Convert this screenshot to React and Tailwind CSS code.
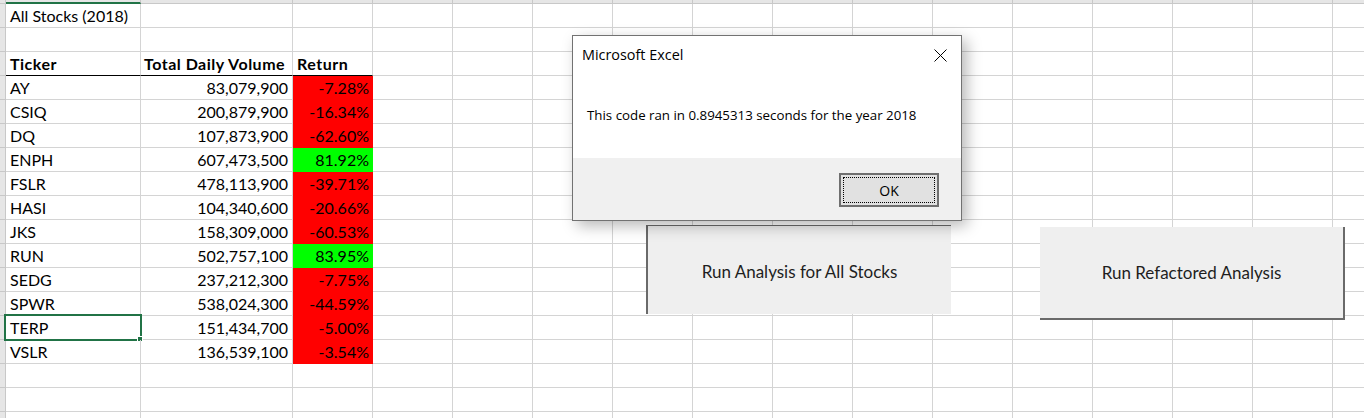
import React from 'react';

const stocks = [
  ['AY', '83,079,900', '-7.28%', false],
  ['CSIQ', '200,879,900', '-16.34%', false],
  ['DQ', '107,873,900', '-62.60%', false],
  ['ENPH', '607,473,500', '81.92%', true],
  ['FSLR', '478,113,900', '-39.71%', false],
  ['HASI', '104,340,600', '-20.66%', false],
  ['JKS', '158,309,000', '-60.53%', false],
  ['RUN', '502,757,100', '83.95%', true],
  ['SEDG', '237,212,300', '-7.75%', false],
  ['SPWR', '538,024,300', '-44.59%', false],
  ['TERP', '151,434,700', '-5.00%', false],
  ['VSLR', '136,539,100', '-3.54%', false],
];

const extraCols = Array.from({ length: 13 }, (_, i) => i);

// 18 visible rows: title, blank, header, 12 stocks, 3 blank
const rows = [
  { a: 'All Stocks (2018)' },
  {},
  { a: 'Ticker', b: 'Total Daily Volume', c: 'Return', header: true },
  ...stocks.map(([a, b, c, up]) => ({ a, b, c, fill: up ? 'green' : 'red', selected: a === 'TERP' })),
  {},
  {},
  {},
];

function Row({ row }) {
  const base = 'h-[24px] shrink-0 border-r border-b border-[#d4d4d4] flex items-end pb-[1px] leading-[20px] whitespace-nowrap';
  const dark = row.header ? 'border-b-black font-bold tracking-[0.5px]' : '';
  return (
    <div className="flex h-[24px]">
      <div className="w-[6px] h-[24px] shrink-0 bg-[#e6e6e6] border-r border-b border-[#c8c8c8]" />
      <div className={`${base} ${dark} w-[135px] pl-[4px] relative`}>
        {row.a}
        {row.selected && (
          <>
            <div className="absolute -left-[2px] -top-[2px] w-[138px] h-[27px] border-2 border-[#217346]" />
            <div className="absolute -right-[3px] -bottom-[3px] w-[6px] h-[6px] bg-[#217346] border border-white" />
          </>
        )}
      </div>
      <div className={`${base} ${dark} w-[152px] pr-[4px] ${row.header ? 'pl-[3px] justify-start' : 'justify-end'}`}>
        {row.b}
      </div>
      <div
        className={`${base} ${dark} w-[80px] pr-[3px] ${row.header ? 'pl-[4px] justify-start' : 'justify-end'} ${
          row.fill === 'red' ? 'bg-[#ff0000] border-r-[#ff0000] border-b-[#ff0000]' : ''
        } ${row.fill === 'green' ? 'bg-[#00ff00] border-r-[#00ff00] border-b-[#00ff00]' : ''}`}
      >
        {row.c}
      </div>
      {extraCols.map((i) => (
        <div key={i} className="w-[80px] h-[24px] shrink-0 border-r border-b border-[#d4d4d4]" />
      ))}
    </div>
  );
}

function Sheet() {
  return (
    <div className="flex flex-col font-[family-name:Lato,sans-serif] text-[16px] text-black">
      <div className="flex h-[4px]">
        <div className="w-[6px] h-[4px] shrink-0 bg-[#e6e6e6] border-r border-b border-[#c8c8c8]" />
        <div className="w-[135px] h-[4px] shrink-0 bg-[#e6e6e6] border-r border-[#c8c8c8] border-b-2 border-b-[#217346]" />
        <div className="w-[152px] h-[4px] shrink-0 bg-[#e6e6e6] border-r border-b border-[#c8c8c8]" />
        <div className="w-[80px] h-[4px] shrink-0 bg-[#e6e6e6] border-r border-b border-[#c8c8c8]" />
        {extraCols.map((i) => (
          <div key={i} className="w-[80px] h-[4px] shrink-0 bg-[#e6e6e6] border-r border-b border-[#c8c8c8]" />
        ))}
      </div>
      {rows.map((row, i) => (
        <Row key={i} row={row} />
      ))}
    </div>
  );
}

function MessageBox() {
  return (
    <div className="absolute left-[572px] top-[35px] w-[390px] h-[186px] border border-[#727272] bg-white flex flex-col shadow-[5px_5px_14px_rgba(0,0,0,0.28)] font-[family-name:'Open_Sans',sans-serif] text-black">
      <div className="h-[38px] flex items-center justify-between pl-[9px] pr-[14px] text-[14.4px]">
        <span>Microsoft Excel</span>
        <svg width="13" height="13" viewBox="0 0 13 13" className="shrink-0">
          <path d="M0.5 0.5L12.5 12.5M12.5 0.5L0.5 12.5" stroke="#000" strokeWidth="1" />
        </svg>
      </div>
      <div className="flex-1 flex items-center pl-[14px] text-[13.3px]">
        This code ran in 0.8945313 seconds for the year 2018
      </div>
      <div className="h-[62px] bg-[#f0f0f0] flex justify-end items-start pt-[15px] pr-[22px]">
        <button className="w-[100px] h-[34px] border-2 border-[#6f6f6f] bg-[#e1e1e1] p-[2px]">
          <div className="w-full h-full border border-dotted border-black flex items-center justify-center text-[14px]">
            OK
          </div>
        </button>
      </div>
    </div>
  );
}

export default function App() {
  return (
    <div className="relative w-[1364px] h-[418px] overflow-hidden bg-white">
      <Sheet />
      <div className="absolute left-[646px] top-[225px] w-[305px] h-[89px] bg-[#efefef] border-l-2 border-t border-[#6a6a6a] flex items-center justify-center pt-[4px] font-[family-name:Lato,sans-serif] text-[17px] text-[#1e1e1e]">
        Run Analysis for All Stocks
      </div>
      <div className="absolute left-[1040px] top-[227px] w-[305px] h-[93px] bg-[#efefef] border-r-2 border-b-2 border-[#6a6a6a] flex items-center justify-center font-[family-name:Lato,sans-serif] text-[17px] text-[#1e1e1e]">
        Run Refactored Analysis
      </div>
      <MessageBox />
    </div>
  );
}
